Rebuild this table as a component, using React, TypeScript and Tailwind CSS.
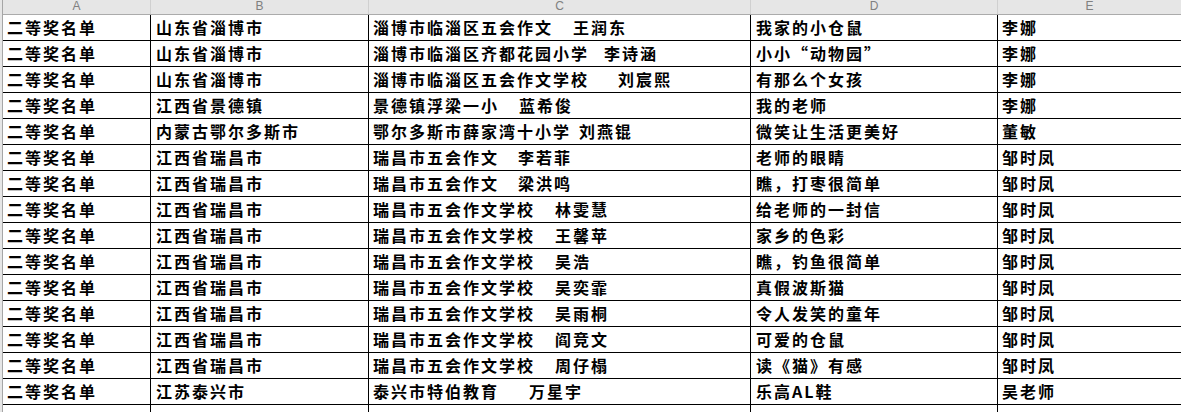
import React from "react";

type Row = { a: string; b: string; c1: string; c2: string; gap: number; d: string; e: string };

const rows: Row[] = [
  { a: "二等奖名单", b: "山东省淄博市", c1: "淄博市临淄区五会作文", c2: "王润东", gap: 20, d: "我家的小仓鼠", e: "李娜" },
  { a: "二等奖名单", b: "山东省淄博市", c1: "淄博市临淄区齐都花园小学", c2: "李诗涵", gap: 15, d: "小小“动物园”", e: "李娜" },
  { a: "二等奖名单", b: "山东省淄博市", c1: "淄博市临淄区五会作文学校", c2: "刘宸熙", gap: 29, d: "有那么个女孩", e: "李娜" },
  { a: "二等奖名单", b: "江西省景德镇", c1: "景德镇浮梁一小", c2: "蓝希俊", gap: 20, d: "我的老师", e: "李娜" },
  { a: "二等奖名单", b: "内蒙古鄂尔多斯市", c1: "鄂尔多斯市薛家湾十小学", c2: "刘燕锟", gap: 8, d: "微笑让生活更美好", e: "董敏" },
  { a: "二等奖名单", b: "江西省瑞昌市", c1: "瑞昌市五会作文", c2: "李若菲", gap: 19, d: "老师的眼睛", e: "邹时凤" },
  { a: "二等奖名单", b: "江西省瑞昌市", c1: "瑞昌市五会作文", c2: "梁洪鸣", gap: 19, d: "瞧，打枣很简单", e: "邹时凤" },
  { a: "二等奖名单", b: "江西省瑞昌市", c1: "瑞昌市五会作文学校", c2: "林雯慧", gap: 20, d: "给老师的一封信", e: "邹时凤" },
  { a: "二等奖名单", b: "江西省瑞昌市", c1: "瑞昌市五会作文学校", c2: "王馨苹", gap: 20, d: "家乡的色彩", e: "邹时凤" },
  { a: "二等奖名单", b: "江西省瑞昌市", c1: "瑞昌市五会作文学校", c2: "吴浩", gap: 20, d: "瞧，钓鱼很简单", e: "邹时凤" },
  { a: "二等奖名单", b: "江西省瑞昌市", c1: "瑞昌市五会作文学校", c2: "吴奕霏", gap: 20, d: "真假波斯猫", e: "邹时凤" },
  { a: "二等奖名单", b: "江西省瑞昌市", c1: "瑞昌市五会作文学校", c2: "吴雨桐", gap: 20, d: "令人发笑的童年", e: "邹时凤" },
  { a: "二等奖名单", b: "江西省瑞昌市", c1: "瑞昌市五会作文学校", c2: "阎竞文", gap: 20, d: "可爱的仓鼠", e: "邹时凤" },
  { a: "二等奖名单", b: "江西省瑞昌市", c1: "瑞昌市五会作文学校", c2: "周仔榻", gap: 20, d: "读《猫》有感", e: "邹时凤" },
  { a: "二等奖名单", b: "江苏泰兴市", c1: "泰兴市特伯教育", c2: "万星宇", gap: 30, d: "乐高AL鞋", e: "吴老师" },
];

const cols = "grid grid-cols-[148px_218px_382px_247px_1fr]";
const cell =
  "h-[26px] border-b border-r border-black pl-[4px] leading-[25px] whitespace-nowrap overflow-hidden";

export default function App() {
  return (
    <div
      className="w-[1181px] h-[412px] overflow-hidden bg-white text-black"
      style={{ fontFamily: '"Noto Sans CJK SC", "Liberation Serif", serif' }}
      lang="zh-CN"
    >
      <div className="flex h-full">
        <div className="w-[2px] shrink-0 bg-[#e6e6e6] border-r border-[#a6a6a6] box-content" />
        <div className="flex-1 min-w-0">
          <div
            className={`${cols} h-[15px] bg-[#e6e6e6] border-b border-[#ababab] text-[#808080] text-[12px]`}
            style={{ fontFamily: '"Liberation Sans", sans-serif' }}
          >
            {["A", "B", "C", "D", "E"].map((l, i) => (
              <div
                key={l}
                className={`h-[14px] text-center leading-[13px] ${i < 4 ? "border-r border-[#d0d0d0]" : ""}`}
              >
                {l}
              </div>
            ))}
          </div>
          {rows.map((r, i) => (
            <div key={i} className={`${cols} text-[16px] font-bold tracking-[2px]`}>
              <div className={cell}>{r.a}</div>
              <div className={`${cell} pl-[5px]`}>{r.b}</div>
              <div className={cell}>
                {r.c1}
                <span style={{ marginLeft: r.gap }}>{r.c2}</span>
              </div>
              <div className={`${cell} pl-[5px]`}>{r.d}</div>
              <div className={`${cell} border-r-0`}>{r.e}</div>
            </div>
          ))}
          <div className={cols}>
            <div className="h-[26px] border-r border-black" />
            <div className="h-[26px] border-r border-black" />
            <div className="h-[26px] border-r border-black" />
            <div className="h-[26px] border-r border-black" />
            <div className="h-[26px]" />
          </div>
        </div>
      </div>
    </div>
  );
}
